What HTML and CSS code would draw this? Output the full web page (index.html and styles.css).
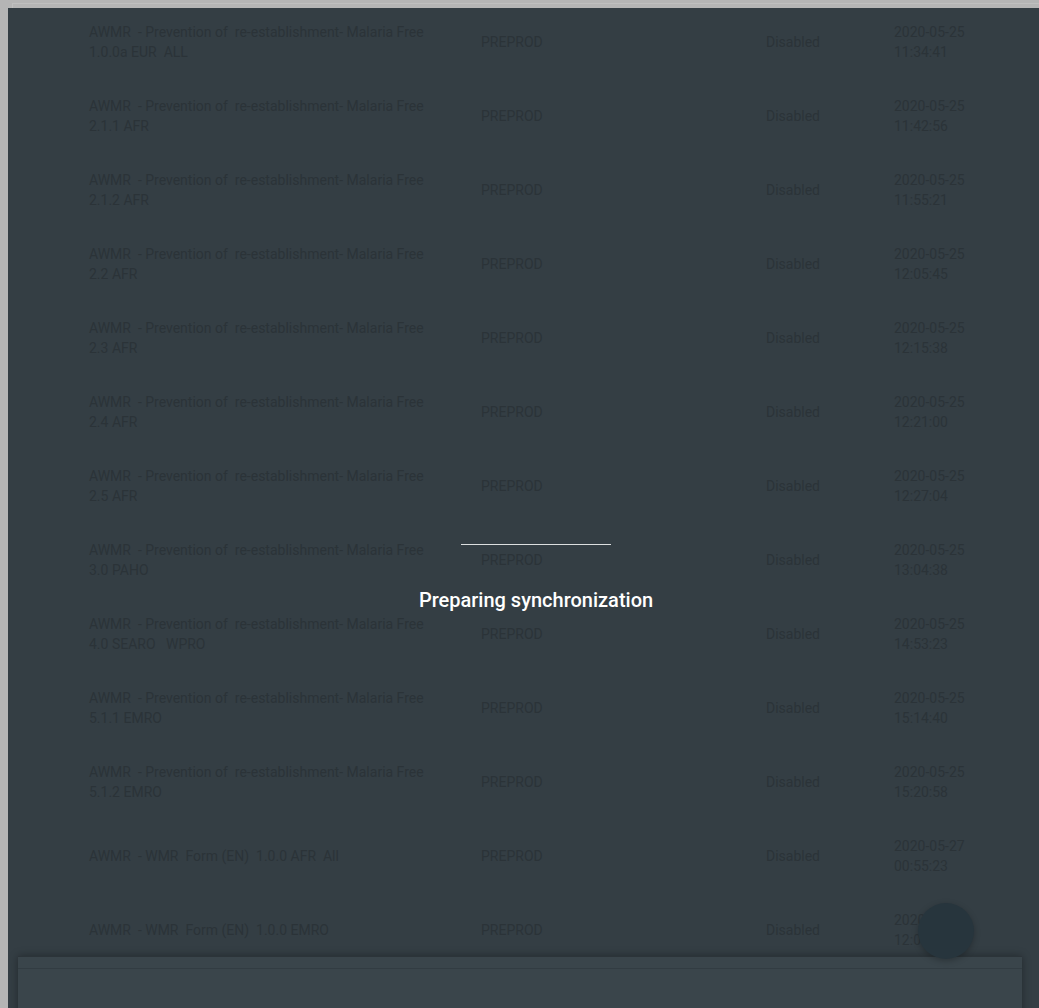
FILE: index.html
```html
<!DOCTYPE html>
<html lang="en">
<head>
<meta charset="utf-8">
<title>Synchronization</title>
<link rel="stylesheet" href="styles.css">
</head>
<body>
<div class="chrome"><div class="chrome-edge"></div></div>
<div class="screen">
  <div class="table">
    <div class="row"><div class="cell-sel"></div><div class="cell-name">AWMR  - Prevention of  re-establishment- Malaria Free 1.0.0a EUR  ALL</div><div class="cell-env">PREPROD</div><div class="cell-status">Disabled</div><div class="cell-date">2020-05-25 11:34:41</div></div>
    <div class="row"><div class="cell-sel"></div><div class="cell-name">AWMR  - Prevention of  re-establishment- Malaria Free 2.1.1 AFR</div><div class="cell-env">PREPROD</div><div class="cell-status">Disabled</div><div class="cell-date">2020-05-25 11:42:56</div></div>
    <div class="row"><div class="cell-sel"></div><div class="cell-name">AWMR  - Prevention of  re-establishment- Malaria Free 2.1.2 AFR</div><div class="cell-env">PREPROD</div><div class="cell-status">Disabled</div><div class="cell-date">2020-05-25 11:55:21</div></div>
    <div class="row"><div class="cell-sel"></div><div class="cell-name">AWMR  - Prevention of  re-establishment- Malaria Free 2.2 AFR</div><div class="cell-env">PREPROD</div><div class="cell-status">Disabled</div><div class="cell-date">2020-05-25 12:05:45</div></div>
    <div class="row"><div class="cell-sel"></div><div class="cell-name">AWMR  - Prevention of  re-establishment- Malaria Free 2.3 AFR</div><div class="cell-env">PREPROD</div><div class="cell-status">Disabled</div><div class="cell-date">2020-05-25 12:15:38</div></div>
    <div class="row"><div class="cell-sel"></div><div class="cell-name">AWMR  - Prevention of  re-establishment- Malaria Free 2.4 AFR</div><div class="cell-env">PREPROD</div><div class="cell-status">Disabled</div><div class="cell-date">2020-05-25 12:21:00</div></div>
    <div class="row"><div class="cell-sel"></div><div class="cell-name">AWMR  - Prevention of  re-establishment- Malaria Free 2.5 AFR</div><div class="cell-env">PREPROD</div><div class="cell-status">Disabled</div><div class="cell-date">2020-05-25 12:27:04</div></div>
    <div class="row"><div class="cell-sel"></div><div class="cell-name">AWMR  - Prevention of  re-establishment- Malaria Free 3.0 PAHO</div><div class="cell-env">PREPROD</div><div class="cell-status">Disabled</div><div class="cell-date">2020-05-25 13:04:38</div></div>
    <div class="row"><div class="cell-sel"></div><div class="cell-name">AWMR  - Prevention of  re-establishment- Malaria Free 4.0 SEARO   WPRO</div><div class="cell-env">PREPROD</div><div class="cell-status">Disabled</div><div class="cell-date">2020-05-25 14:53:23</div></div>
    <div class="row"><div class="cell-sel"></div><div class="cell-name">AWMR  - Prevention of  re-establishment- Malaria Free 5.1.1 EMRO</div><div class="cell-env">PREPROD</div><div class="cell-status">Disabled</div><div class="cell-date">2020-05-25 15:14:40</div></div>
    <div class="row"><div class="cell-sel"></div><div class="cell-name">AWMR  - Prevention of  re-establishment- Malaria Free 5.1.2 EMRO</div><div class="cell-env">PREPROD</div><div class="cell-status">Disabled</div><div class="cell-date">2020-05-25 15:20:58</div></div>
    <div class="row"><div class="cell-sel"></div><div class="cell-name">AWMR  - WMR  Form (EN)  1.0.0 AFR  All</div><div class="cell-env">PREPROD</div><div class="cell-status">Disabled</div><div class="cell-date">2020-05-27 00:55:23</div></div>
    <div class="row"><div class="cell-sel"></div><div class="cell-name">AWMR  - WMR  Form (EN)  1.0.0 EMRO</div><div class="cell-env">PREPROD</div><div class="cell-status">Disabled</div><div class="cell-date">2020-05-27 12:05:10</div></div>
  </div>

  <div class="loading">
    <div class="progress"></div>
    <div class="loading-text">Preparing synchronization</div>
  </div>

  <div class="fab"></div>
  <div class="sheet"><div class="sheet-head"></div></div>
</div>
</body>
</html>
```

FILE: styles.css
```css
html, body {
  margin: 0;
  padding: 0;
}
body {
  background: #b5b5b5;
  height: 1008px;
  overflow: hidden;
  font-family: Roboto, "Liberation Sans", sans-serif;
}
.chrome {
  height: 8px;
  overflow: hidden;
}
.chrome-edge {
  margin: 3px 0 0 12px;
  height: 10px;
  border-top: 1px solid #bfbfbf;
  border-left: 1px solid #bfbfbf;
}
.screen {
  position: relative;
  margin-left: 8px;
  height: 1000px;
  background: #343e44;
  overflow: hidden;
}
.table {
  margin-top: -3px;
  font-size: 14px;
  line-height: 20px;
  color: #2b3338;
}
.row {
  display: grid;
  grid-template-columns: 81px 392px 285px 128px 1fr;
  align-items: center;
  height: 74px;
}
.cell-name {
  width: 342px;
  white-space: pre-wrap;
}
.cell-date {
  width: 80px;
}
.loading {
  position: absolute;
  left: 0;
  right: -25px;
  top: 536px;
  display: flex;
  flex-direction: column;
  align-items: center;
}
.progress {
  width: 150px;
  height: 1px;
  background: #dcdfe0;
}
.loading-text {
  margin-top: 43px;
  font-size: 20px;
  font-weight: 500;
  line-height: 24px;
  color: #ffffff;
}
.fab {
  position: absolute;
  left: 910px;
  top: 895px;
  width: 56px;
  height: 56px;
  border-radius: 50%;
  background: #27353d;
  box-shadow: 0 2px 6px rgba(0, 0, 0, 0.25);
  z-index: 2;
}
.sheet {
  position: absolute;
  left: 10px;
  right: 17px;
  top: 948px;
  height: 80px;
  background: #3a454b;
  border-top: 1px solid #2c3439;
  box-shadow: 0 0 8px rgba(0, 0, 0, 0.35);
  z-index: 1;
}
.sheet-head {
  height: 11px;
  border-bottom: 1px solid #323c42;
}
```
